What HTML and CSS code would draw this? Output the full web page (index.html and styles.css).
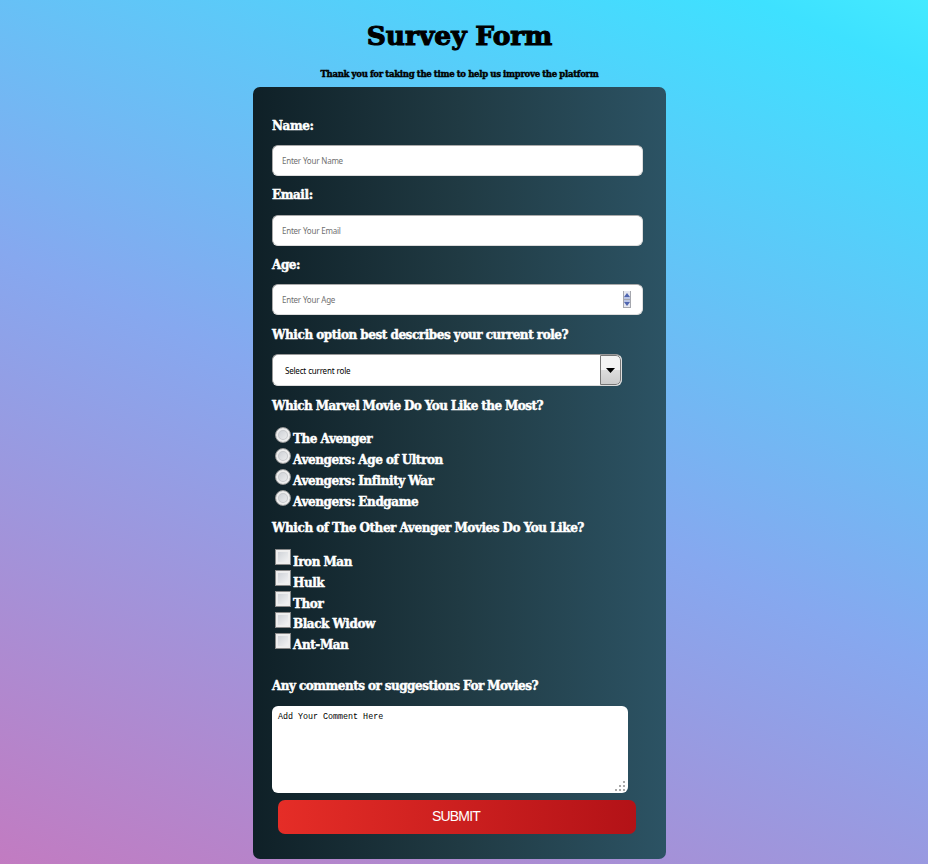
FILE: index.html
```html
<!DOCTYPE html>
<html lang="en">
<head>
<meta charset="utf-8">
<title>Survey Form</title>
<link rel="stylesheet" href="styles.css">
</head>
<body>
<header>
<h1>Survey Form</h1>
<p class="intro">Thank you for taking the time to help us improve the platform</p>
</header>
<form class="card">
<label class="question" for="name">Name:</label>
<input class="field" id="name" type="text" placeholder="Enter Your Name">
<label class="question email" for="email">Email:</label>
<input class="field" id="email" type="email" placeholder="Enter Your Email">
<label class="question" for="age">Age:</label>
<div class="age-wrap"><input class="field" id="age" type="text" placeholder="Enter Your Age">
<svg class="spinner" width="8" height="17" viewBox="0 0 8 17"><path fill="#e4e6ef" d="M0 0h8v17H0z"/><path fill="#b9c4e4" d="M1 6h6v5H1z"/><path stroke="#a5a7ae" d="M.5 0v17M7.500 0v17M0 8.500h8M0 16.500h8"/><path fill="#4f65b0" d="M1 6l3-4 3 4zM1 11h6l-3 4z"/></svg></div>
<div class="question role">Which option best describes your current role?</div>
<div class="select"><span>Select current role</span><div class="arrow"><svg width="9" height="5" viewBox="0 0 9 5"><path d="M0 0h9L4.500 5z"/></svg></div></div>
<div class="question marvel">Which Marvel Movie Do You Like the Most?</div>
<div class="options radios">
<label><input type="radio" name="movie"><span>The Avenger</span></label>
<label><input type="radio" name="movie"><span>Avengers: Age of Ultron</span></label>
<label><input type="radio" name="movie"><span>Avengers: Infinity War</span></label>
<label><input type="radio" name="movie"><span>Avengers: Endgame</span></label>
</div>
<div class="question other">Which of The Other Avenger Movies Do You Like?</div>
<div class="options checks">
<label><input type="checkbox"><span>Iron Man</span></label>
<label><input type="checkbox"><span>Hulk</span></label>
<label><input type="checkbox"><span>Thor</span></label>
<label><input type="checkbox"><span>Black Widow</span></label>
<label><input type="checkbox"><span>Ant-Man</span></label>
</div>
<label class="question comments" for="comments">Any comments or suggestions For Movies?</label>
<div class="comment-wrap"><textarea id="comments">Add Your Comment Here</textarea>
<svg class="grip" width="11" height="11" viewBox="0 0 11 11"><path fill="#aaa" d="M8 0h2v2H8zM4 4h2v2H4zM8 4h2v2H8zM0 8h2v2H0zM4 8h2v2H4zM8 8h2v2H8z"/></svg></div>
<button type="button">SUBMIT</button>
</form>
</body>
</html>
```
FILE: styles.css
```css
* { box-sizing: border-box; }
html { height: 864px; overflow: hidden; }
body {
  margin: 0;
  height: 864px;
  padding-right: 9px;
  overflow: hidden;
  background: linear-gradient(24deg, #c27bc1 0%, #86a8ef 48%, #3ee1ff 94%, #43eaff 100%);
  font: bold 12px "DejaVu Serif", serif;
  letter-spacing: -.42px;
  word-spacing: -.3px;
}
header { height: 87px; text-align: center; }
h1 {
  margin: 0;
  padding-top: 17px;
  font-size: 26.5px;
  line-height: 38px;
  letter-spacing: -.05px;
  -webkit-text-stroke: 1.1px #000;
}
.intro {
  margin: 12px 0 0;
  font-size: 8.5px;
  line-height: 14px;
  letter-spacing: -.27px;
  -webkit-text-stroke: .4px #000;
}
.card {
  width: 413px;
  height: 772px;
  margin: 0 auto;
  padding: 30px 19px 0;
  border-radius: 7px;
  background: linear-gradient(90deg, #0f2027, #203a43 50%, #2c5364);
  color: #fff;
}
.question {
  display: block;
  height: 28px;
  line-height: 18px;
  white-space: nowrap;
  -webkit-text-stroke: .45px #fff;
}
.field {
  display: block;
  width: 371px;
  height: 31px;
  margin-bottom: 10px;
  padding: 0 9px;
  border: 1px solid #aaa;
  border-right-color: #ddd;
  border-bottom-color: #ddd;
  border-radius: 6px;
  background: #fff;
  font: 8px "Noto Sans", sans-serif;
  letter-spacing: -.25px;
  word-spacing: .3px;
}
.field::placeholder { color: #707070; opacity: 1; }
.question.email { height: 29px; }
.age-wrap { position: relative; margin-bottom: 11px; }
.spinner { position: absolute; left: 351px; top: 7px; }
.select {
  display: flex;
  justify-content: space-between;
  align-items: center;
  width: 350px;
  height: 32px;
  padding-left: 12px;
  border: 1px solid #999;
  border-color: #999 #ddd #ddd #999;
  border-radius: 6px;
  background: #fff;
  color: #000;
  font: 8px "Noto Sans", sans-serif;
  letter-spacing: -.2px;
  word-spacing: .3px;
  overflow: hidden;
}
.arrow {
  display: flex;
  justify-content: center;
  align-items: center;
  width: 21px;
  height: 30px;
  border: 1px solid #777;
  border-radius: 0 5px 5px 0;
  background: linear-gradient(#f4f4f4 50%, #ddd 50%, #ccc);
}
.marvel { margin-top: 11px; height: 30px; letter-spacing: -.5px; }
.options label { display: flex; height: 21px; line-height: 21px; }
.options span { padding-top: 2px; -webkit-text-stroke: .45px #fff; white-space: nowrap; }
.options input { appearance: none; flex: none; width: 16px; height: 16px; margin: 0 2px 0 3px; }
.radios input {
  border: 1px solid #999;
  border-radius: 50%;
  background: linear-gradient(135deg, #c4c8ce, #f6f6f6);
  box-shadow: inset 0 0 0 2px #eee, inset 0 0 0 3px #c8cacd;
}
.other { margin-top: 8px; height: 30px; }
.checks input {
  border: 1px solid #888;
  background: linear-gradient(135deg, #c9cdd3, #f8f8f8);
  box-shadow: inset 0 0 0 2px #eee;
  margin-right: 2px;
}
.checks label:nth-child(-n+3) span { padding-top: 3px; }
.comments { margin-top: 23px; height: 29px; letter-spacing: -.48px; }
.comment-wrap { position: relative; width: 356px; height: 87px; }
textarea {
  display: block;
  width: 356px;
  height: 87px;
  padding: 6px;
  border: 0;
  border-radius: 6px;
  background: #fff;
  resize: none;
  font: 8.35px "Liberation Mono", monospace;
  letter-spacing: 0;
  word-spacing: 0;
}
.grip { position: absolute; right: 2px; bottom: 1px; }
button {
  display: block;
  width: 358px;
  height: 34px;
  margin: 7px 0 0 6px;
  padding: 0 8px 2px 6px;
  border: 0;
  border-radius: 7px;
  background: linear-gradient(90deg, #e52d27, #b31217);
  color: #fff;
  font: 14px "Liberation Sans", sans-serif;
  letter-spacing: -.8px;
}
```
